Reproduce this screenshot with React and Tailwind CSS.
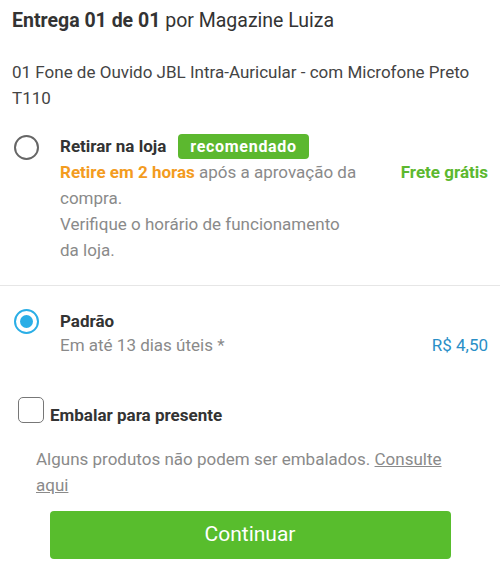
export default function App() {
  return (
    <div
      className="w-[500px] h-[562px] bg-white overflow-hidden text-[#333]"
      style={{ fontFamily: "Roboto, 'Noto Sans', sans-serif" }}
    >
      {/* header */}
      <div className="px-3 pt-[8px] text-[19.5px] leading-[25px]">
        <span className="font-bold">Entrega 01 de 01</span> por Magazine Luiza
      </div>
      <div className="px-3 mt-[26px] text-[17px] leading-[26px] text-[#444]">
        01 Fone de Ouvido JBL Intra-Auricular - com Microfone Preto T110
      </div>

      {/* retirar na loja */}
      <div className="flex mt-[23px] pr-3">
        <div className="w-[60px] pl-[14px] pt-[1px]">
          <div className="w-[25px] h-[25px] rounded-full border-[2.5px] border-[#666]" />
        </div>
        <div className="flex-1">
          <div className="flex items-center h-[25px]">
            <span className="font-bold text-[17px] text-[#333]">Retirar na loja</span>
            <span className="ml-3 h-[25px] px-[12px] rounded-[4px] bg-[#5cb82f] text-white font-bold text-[16px] tracking-[0.7px] flex items-center">
              recomendado
            </span>
          </div>
          <div className="flex justify-between">
            <div className="w-[302px] text-[17px] leading-[26px] text-[#8a8a8a]">
              <p>
                <span className="font-bold text-[#f39c1f]">Retire em 2 horas</span> após a aprovação da compra.
              </p>
              <p>Verifique o horário de funcionamento da loja.</p>
            </div>
            <div className="text-[17px] leading-[26px] font-bold text-[#5cb82f]">Frete grátis</div>
          </div>
        </div>
      </div>

      <div className="mt-[22px] h-px bg-[#e6e6e6]" />

      {/* padrão */}
      <div className="flex mt-[23px] pr-3">
        <div className="w-[60px] pl-[14px]">
          <div className="w-[25px] h-[25px] rounded-full border-[2.5px] border-[#2aaee6] flex items-center justify-center">
            <div className="w-[13px] h-[13px] rounded-full bg-[#2aaee6]" />
          </div>
        </div>
        <div className="flex-1">
          <div className="font-bold text-[17px] leading-[24px] text-[#333]">Padrão</div>
          <div className="flex justify-between text-[17px] leading-[24px]">
            <span className="text-[#8a8a8a]">Em até 13 dias úteis *</span>
            <span className="text-[#2a8fc7]">R$ 4,50</span>
          </div>
        </div>
      </div>

      {/* embalar */}
      <div className="flex items-end mt-[40px] pl-[18px]">
        <div className="w-[26px] h-[26px] mb-[2px] rounded-[5px] border-[1.5px] border-[#777]" />
        <span className="ml-[6px] font-bold text-[17px] leading-[20px] text-[#333]">Embalar para presente</span>
      </div>

      <div className="pl-[36px] pr-[40px] mt-[21px] text-[17px] leading-[26px] text-[#8a8a8a]">
        Alguns produtos não podem ser embalados. <span className="underline">Consulte aqui</span>
      </div>

      <div className="flex justify-center mt-[13px]">
        <button className="w-[401px] h-[48px] rounded-[4px] bg-[#58bd2d] text-white text-[21px]">
          Continuar
        </button>
      </div>
    </div>
  );
}
